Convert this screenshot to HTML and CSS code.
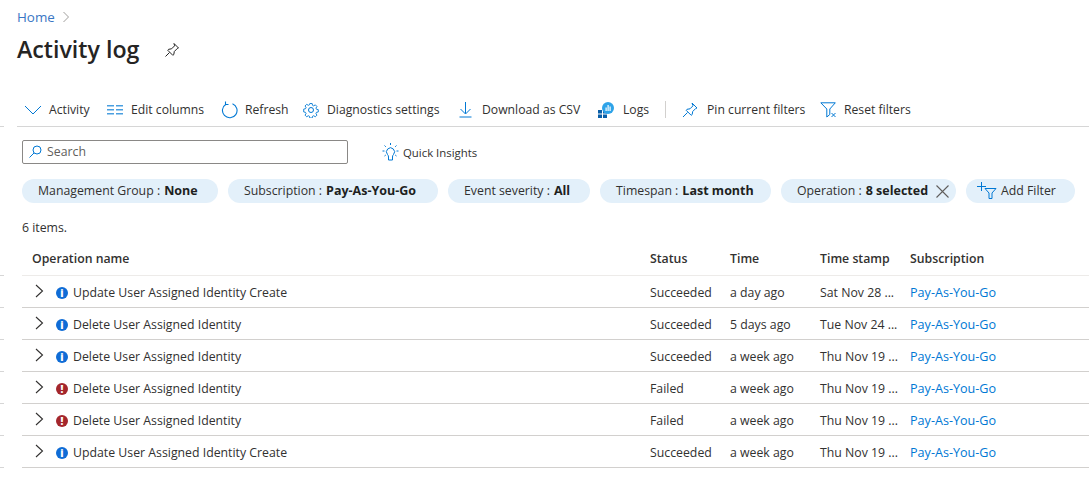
FILE: index.html
```html
<!DOCTYPE html>
<html>
<head>
<title>Activity log</title>
<link rel="stylesheet" href="styles.css">
</head>
<body>
<div class="breadcrumb"><a href="#">Home</a>
  <svg class="crumb-arrow" width="8" height="12" viewBox="0 0 8 12"><path d="M1.500 1l5 5-5 5" fill="none" stroke="#a19f9d"/></svg>
</div>
<div class="title-row">
  <h1>Activity log</h1>
  <svg width="16" height="16" viewBox="0 0 16 16" fill="none" stroke="#222"><path d="M10 1.500l4.500 4.500-1.200 .5-3 3-.5 3-1 .8-5-5 .8-1 3-.5 3-3zM5.500 10.500L1.500 14.500"/></svg>
</div>

<div class="toolbar">
  <button class="tool tool-activity"><svg width="18" height="10" viewBox="0 0 18 10" fill="none" stroke="#0078d4"><path d="M1 1l8 8 8-8"/></svg><span>Activity</span></button>
  <button class="tool tool-columns"><svg width="16" height="12" viewBox="0 0 16 12" fill="#4a9fe0"><path d="M0 1h7v1.500H0zM9 1h7v1.500H9zM0 5h7v1.500H0zM9 5h7v1.500H9zM0 9h7v1.500H0zM9 9h7v1.500H9z"/></svg><span>Edit columns</span></button>
  <button class="tool tool-refresh"><svg width="17" height="18" viewBox="0 0 17 18" fill="none" stroke="#0078d4" stroke-width="1.100"><path d="M5 3.200a7.300 7.300 0 1 0 6.500 -.5M4.500 .5v3h3"/></svg><span>Refresh</span></button>
  <button class="tool tool-diag"><svg width="16" height="16" viewBox="0 0 16 16" fill="none" stroke="#0078d4"><circle cx="8" cy="8" r="2.500"/><path d="M6.700 .8h2.600l.4 2 1.300 .6 1.800-1.100 1.800 1.800-1.100 1.800.6 1.300 2 .4v2.600l-2 .4-.6 1.300 1.100 1.800-1.800 1.800-1.800-1.100-1.300 .6-.4 2H6.700l-.4-2-1.300-.6-1.800 1.100-1.800-1.800 1.100-1.800-.6-1.300-2-.4V7l2-.4.600-1.300-1.100-1.800 1.800-1.800 1.800 1.100 1.300-.6z" transform="translate(.8 .8) scale(.9)"/></svg><span>Diagnostics settings</span></button>
  <button class="tool tool-download"><svg width="13" height="16" viewBox="0 0 13 16" fill="none" stroke="#0078d4"><path d="M6.500 0v11.500M1.500 7l5 5 5-5M.5 15h12"/></svg><span>Download as CSV</span></button>
  <button class="tool tool-logs"><svg width="16" height="16" viewBox="0 0 16 16"><path d="M0 8h4v3.500H0zM5 8h4v3.500H5zM0 12.500h4V16H0zM5 12.500h4V16H5z" fill="#0a5fa8"/><circle cx="10" cy="6" r="6" fill="#2ea3e8"/><path d="M7.500 5.500h1.200V9H7.500zM9.500 3h1.200v6H9.500zM11.500 4.500h1.200V9h-1.200z" fill="#fff"/></svg><span>Logs</span></button>
  <div class="tool-sep"></div>
  <button class="tool tool-pin"><svg width="16" height="16" viewBox="0 0 16 16" fill="none" stroke="#0078d4"><path d="M10 1l5 5-1.300 .5-3 3-.5 3-1 .8-5-5 .8-1 3-.5 3-3zM5.500 10.500L1 15"/></svg><span>Pin current filters</span></button>
  <button class="tool tool-reset"><svg width="17" height="16" viewBox="0 0 17 16" fill="none" stroke="#0078d4"><path d="M.8 .8h14.500L9.800 7v5.500l-3 2.500V7zM11.500 11l4 4M15.500 11l-4 4"/></svg><span>Reset filters</span></button>
</div>

<div class="search-row">
  <div class="search">
    <svg width="13" height="13" viewBox="0 0 13 13" fill="none" stroke="#0078d4"><circle cx="8" cy="5" r="4"/><path d="M5 8l-4.500 4.500"/></svg>
    <span>Search</span>
  </div>
  <button class="insights">
    <svg width="17" height="18" viewBox="0 0 17 18" fill="none" stroke="#0078d4"><path d="M5.500 11.500a4 4 0 1 1 6 0c-.8 .8-1 1.500-1 2.500v3h-4v-3c0-1-.2-1.700-1-2.500z"/><path d="M8.500 0v2M2.500 2.500l1.300 1.300M14.500 2.500l-1.300 1.300M.5 8h2M14.500 8h2M2.500 13l1.300-1M14.500 13l-1.300-1"/></svg>
    <span>Quick Insights</span>
  </button>
</div>

<div class="pills">
  <div class="pill">Management Group : <b>None</b></div>
  <div class="pill pill-sub">Subscription : <b>Pay-As-You-Go</b></div>
  <div class="pill pill-sev">Event severity : <b>All</b></div>
  <div class="pill pill-span">Timespan : <b>Last month</b></div>
  <div class="pill pill-op">Operation : <b>8 selected</b>
    <svg width="13" height="13" viewBox="0 0 13 13" stroke="#605e5c" stroke-width="1.100"><path d="M.5 .5l12 12M12.500 .5l-12 12"/></svg>
  </div>
  <div class="pill pill-add">
    <svg width="20" height="17" viewBox="0 0 20 17" fill="none" stroke="#0078d4"><path d="M0 4.500h9M4.500 0v9M8 6.500h11l-4 4.500v5.500h-3V11z"/></svg>
    Add Filter
  </div>
</div>

<div class="count">6 items.</div>

<div class="grid">
  <div class="row head">
    <div class="cell name">Operation name</div>
    <div class="cell">Status</div>
    <div class="cell">Time</div>
    <div class="cell">Time stamp</div>
    <div class="cell">Subscription</div>
  </div>
  <div class="row">
    <div class="cell name"><svg class="chev" width="9" height="14" viewBox="0 0 9 14"><path d="M1 1l6.500 6-6.500 6" fill="none" stroke="#323130" stroke-width="1.100"/></svg><span class="dot info">i</span>Update User Assigned Identity Create</div>
    <div class="cell">Succeeded</div>
    <div class="cell">a day ago</div>
    <div class="cell">Sat Nov 28 ...</div>
    <div class="cell"><a href="#">Pay-As-You-Go</a></div>
  </div>
  <div class="row">
    <div class="cell name"><svg class="chev" width="9" height="14" viewBox="0 0 9 14"><path d="M1 1l6.500 6-6.500 6" fill="none" stroke="#323130" stroke-width="1.100"/></svg><span class="dot info">i</span>Delete User Assigned Identity</div>
    <div class="cell">Succeeded</div>
    <div class="cell">5 days ago</div>
    <div class="cell">Tue Nov 24 ...</div>
    <div class="cell"><a href="#">Pay-As-You-Go</a></div>
  </div>
  <div class="row">
    <div class="cell name"><svg class="chev" width="9" height="14" viewBox="0 0 9 14"><path d="M1 1l6.500 6-6.500 6" fill="none" stroke="#323130" stroke-width="1.100"/></svg><span class="dot info">i</span>Delete User Assigned Identity</div>
    <div class="cell">Succeeded</div>
    <div class="cell">a week ago</div>
    <div class="cell">Thu Nov 19 ...</div>
    <div class="cell"><a href="#">Pay-As-You-Go</a></div>
  </div>
  <div class="row">
    <div class="cell name"><svg class="chev" width="9" height="14" viewBox="0 0 9 14"><path d="M1 1l6.500 6-6.500 6" fill="none" stroke="#323130" stroke-width="1.100"/></svg><span class="dot error">!</span>Delete User Assigned Identity</div>
    <div class="cell">Failed</div>
    <div class="cell">a week ago</div>
    <div class="cell">Thu Nov 19 ...</div>
    <div class="cell"><a href="#">Pay-As-You-Go</a></div>
  </div>
  <div class="row">
    <div class="cell name"><svg class="chev" width="9" height="14" viewBox="0 0 9 14"><path d="M1 1l6.500 6-6.500 6" fill="none" stroke="#323130" stroke-width="1.100"/></svg><span class="dot error">!</span>Delete User Assigned Identity</div>
    <div class="cell">Failed</div>
    <div class="cell">a week ago</div>
    <div class="cell">Thu Nov 19 ...</div>
    <div class="cell"><a href="#">Pay-As-You-Go</a></div>
  </div>
  <div class="row">
    <div class="cell name"><svg class="chev" width="9" height="14" viewBox="0 0 9 14"><path d="M1 1l6.500 6-6.500 6" fill="none" stroke="#323130" stroke-width="1.100"/></svg><span class="dot info">i</span>Update User Assigned Identity Create</div>
    <div class="cell">Succeeded</div>
    <div class="cell">a week ago</div>
    <div class="cell">Thu Nov 19 ...</div>
    <div class="cell"><a href="#">Pay-As-You-Go</a></div>
  </div>
</div>
</body>
</html>
```
FILE: styles.css
```css
html, body {
  margin: 0;
  padding: 0;
  background: white;
  color: #323130;
  font-family: "Open Sans", sans-serif;
  font-size: 12.3px;
  overflow: hidden;
}
a {
  color: #0078d4;
  text-decoration: none;
}
button {
  font: inherit;
  color: inherit;
  background: none;
  border: none;
  padding: 0;
}
.breadcrumb {
  display: flex;
  align-items: center;
  gap: 7px;
  height: 18px;
  padding: 8px 0 1px 17px;
  font-size: 13.400px;
}
.breadcrumb a {
  color: #3a76c4;
}
.title-row {
  display: flex;
  align-items: center;
  gap: 25px;
  height: 32px;
  padding: 7px 0 0 17px;
}
h1 {
  margin: -2px 0 0;
  font-size: 23.200px;
  font-weight: 600;
  color: #252423;
  line-height: 32px;
}
.toolbar {
  display: flex;
  align-items: center;
  height: 33px;
  margin: 25px 0 0 17px;
  border-bottom: 1px solid #d6d6d6;
  padding-top: 2px;
  position: relative;
}
.toolbar::before {
  content: "";
  position: absolute;
  left: -17px;
  bottom: -1px;
  width: 4px;
  height: 1px;
  background: #d6d6d6;
}
.tool {
  display: flex;
  align-items: center;
  flex: none;
}
.tool span {
  font-size: 12.200px;
  white-space: nowrap;
}
.tool-activity { margin-left: 7px; width: 83px; gap: 7px; }
.tool-columns { width: 114px; gap: 8px; }
.tool-refresh { width: 82px; gap: 7px; }
.tool-diag { width: 156px; gap: 8px; }
.tool-download { width: 139px; gap: 10px; }
.tool-logs { width: 67px; gap: 9px; }
.tool-sep {
  width: 1px;
  height: 17px;
  background: #d2d0ce;
  margin-right: 16px;
}
.tool-pin { width: 138px; gap: 9px; }
.tool-reset { gap: 7px; }
.search-row {
  display: flex;
  align-items: center;
  height: 24px;
  margin: 13px 0 0 22px;
}
.search {
  display: flex;
  align-items: center;
  gap: 5px;
  width: 326px;
  height: 24px;
  box-sizing: border-box;
  border: 1px solid #8a8886;
  border-radius: 2px;
  padding: 0 0 1px 6px;
  color: #605e5c;
}
.insights {
  display: flex;
  align-items: center;
  gap: 4px;
  margin-left: 34px;
  font-size: 11.400px;
}
.pills {
  display: flex;
  gap: 10px;
  margin: 15px 0 0 22px;
}
.pill {
  display: flex;
  align-items: center;
  gap: 4px;
  width: 196px;
  height: 24px;
  box-sizing: border-box;
  padding: 0 0 2px 16px;
  border-radius: 12px;
  background: #e3f0fa;
  white-space: nowrap;
  flex: none;
}
.pill b {
  color: #201f1e;
  font-size: 12.500px;
  font-weight: 700;
}
.pill-sub { width: 210px; }
.pill-sev { width: 142px; }
.pill-span { width: 171px; }
.pill-op { width: 175px; padding-right: 7px; }
.pill-op svg { margin: 2px 0 0 auto; }
.pill-add { width: 109px; padding-left: 11px; }
.count {
  margin: 17px 0 0 22px;
  line-height: 16px;
  height: 16px;
}
.grid {
  margin: 7px 0 0 22px;
}
.row {
  display: grid;
  grid-template-columns: 628px 80px 90px 90px 1fr;
  align-items: center;
  height: 32px;
  box-sizing: border-box;
  border-bottom: 1px solid #d2d0ce;
  position: relative;
}
.row::before {
  content: "";
  position: absolute;
  left: -22px;
  bottom: -1px;
  width: 4px;
  height: 1px;
  background: #d6d6d6;
}
.head {
  height: 33px;
  font-weight: 600;
  border-bottom-color: #edebe9;
}
.cell {
  white-space: nowrap;
  padding-top: 2px;
}
.cell a {
  font-size: 12.600px;
}
.head .cell {
  padding: 0 0 2px;
}
.head .name {
  padding-left: 10px;
}
.name {
  display: flex;
  align-items: center;
}
.chev {
  margin: -3px 12px 0 13px;
}
.dot {
  width: 12px;
  height: 12px;
  border-radius: 50%;
  margin-right: 5px;
  color: white;
  font-size: 10px;
  font-weight: 800;
  line-height: 12px;
  text-align: center;
  flex: none;
}
.info { background: #0f6cd6; }
.error { background: #a4262c; }
```
